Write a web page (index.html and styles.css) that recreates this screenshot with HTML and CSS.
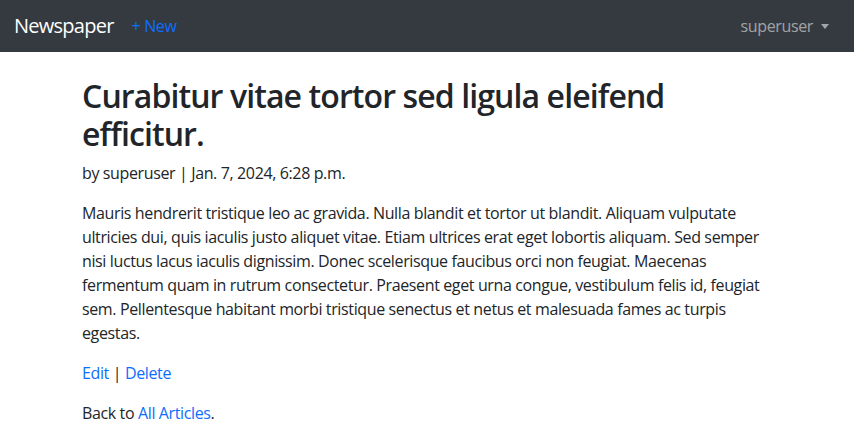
FILE: index.html
```html
<!DOCTYPE html>
<html lang="en">
<head>
<meta charset="utf-8">
<title>Newspaper</title>
<link rel="stylesheet" href="styles.css">
</head>
<body>
<nav class="navbar">
  <div class="nav-left">
    <a class="brand" href="#">Newspaper</a>
    <a class="nav-new" href="#">+ New</a>
  </div>
  <div class="nav-right">
    <a class="user" href="#">superuser<span class="caret"></span></a>
  </div>
</nav>
<main class="container">
  <h2 class="title">Curabitur vitae tortor sed ligula eleifend efficitur.</h2>
  <p class="meta">by superuser | Jan. 7, 2024, 6:28 p.m.</p>
  <p class="body">Mauris hendrerit tristique leo ac gravida. Nulla blandit et tortor ut blandit. Aliquam vulputate ultricies dui, quis iaculis justo aliquet vitae. Etiam ultrices erat eget lobortis aliquam. Sed semper nisi luctus lacus iaculis dignissim. Donec scelerisque faucibus orci non feugiat. Maecenas fermentum quam in rutrum consectetur. Praesent eget urna congue, vestibulum felis id, feugiat sem. Pellentesque habitant morbi tristique senectus et netus et malesuada fames ac turpis egestas.</p>
  <p class="actions"><a href="#">Edit</a> | <a href="#">Delete</a></p>
  <p class="back">Back to <a href="#">All Articles</a>.</p>
</main>
</body>
</html>
```

FILE: styles.css
```css
* { box-sizing: border-box; }
body {
  margin: 0;
  font-family: "Open Sans", "Noto Sans", sans-serif;
  font-size: 16px;
  line-height: 1.5;
  color: #212529;
  background: #fff;
  letter-spacing: -0.37px;
}
a { color: #0d6efd; text-decoration: none; }
.navbar {
  height: 52px;
  background: #343a40;
  display: flex;
  align-items: center;
  justify-content: space-between;
  padding: 0 25px 0 14px;
}
.nav-left { display: flex; align-items: center; }
.brand { color: #fff; font-size: 20px; margin-right: 18px; letter-spacing: -0.75px; }
.nav-new { color: #0d6efd; font-size: 16px; }
.user { color: rgba(255,255,255,0.55); font-size: 16px; display: flex; align-items: center; }
.caret {
  margin-left: 8px;
  border-top: 5px solid rgba(255,255,255,0.55);
  border-left: 4px solid transparent;
  border-right: 4px solid transparent;
  width: 0; height: 0;
}
.container {
  max-width: 720px;
  margin: 0 auto;
  padding: 25px 15px 0;
}
.title {
  font-size: 32px;
  font-weight: 600;
  line-height: 1.2;
  margin: 0 0 7px;
  letter-spacing: -0.9px;
}
.meta { margin: 0 0 16px; }
.body { margin: 0 0 16px; }
.actions { margin: 0 0 16px; }
.back { margin: 0; }
```
